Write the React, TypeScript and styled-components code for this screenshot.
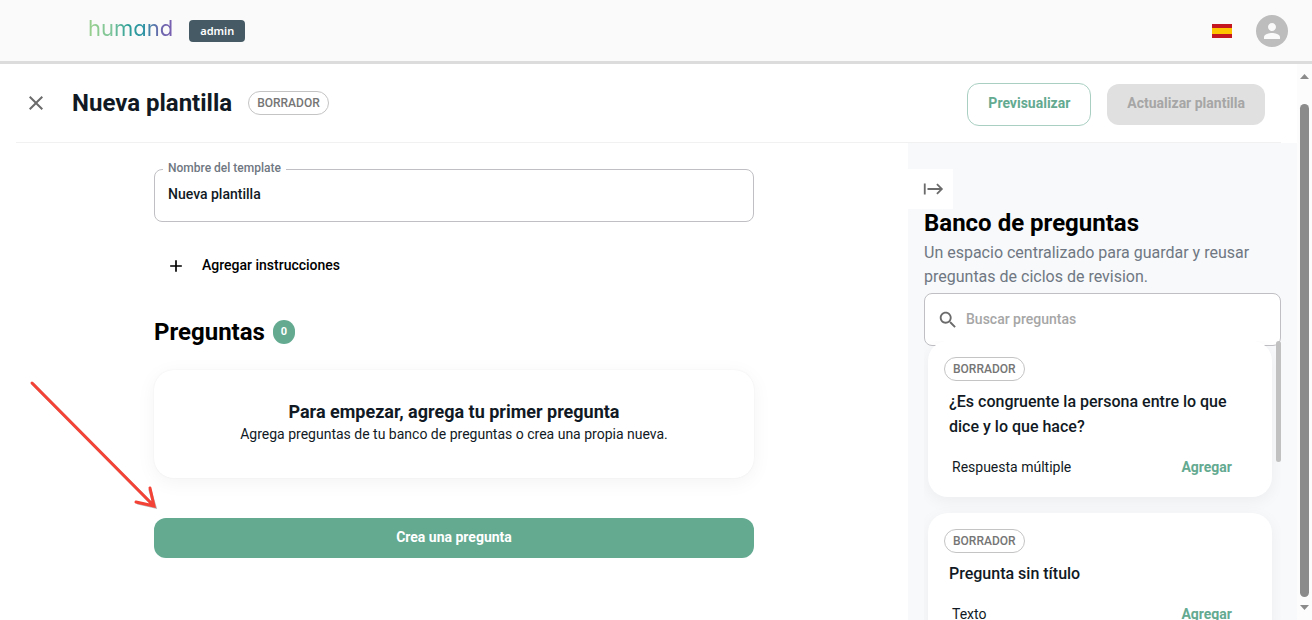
import React from "react";
import styled, { createGlobalStyle } from "styled-components";

const GlobalStyle = createGlobalStyle`
  *, *::before, *::after { box-sizing: border-box; }
  body {
    margin: 0;
    background: #fff;
    color: #111a24;
    font-family: Roboto, "Liberation Sans", sans-serif;
    font-size: 14px;
  }
  h1, h2, h3, p, ul { margin: 0; padding: 0; }
  ul { list-style: none; }
  button, input { font-family: inherit; }
  button { cursor: pointer; }
`;

const green = "#63aa91";

const Page = styled.div`
  display: flex;
  flex-direction: column;
  height: 100vh;
  overflow: hidden;
  position: relative;
`;

const TopBar = styled.header`
  display: flex;
  align-items: center;
  flex: none;
  height: 64px;
  padding: 0 24px 0 88px;
  background: #fafafa;
  border-bottom: 3px solid #dcdcdc;
`;

const Logo = styled.a`
  font-family: Inter, sans-serif;
  font-size: 22px;
  font-weight: 400;
  line-height: 24px;
  font-feature-settings: "cv11";
  text-decoration: none;
  padding-bottom: 6px;
  background: linear-gradient(90deg, #9ad08c 0%, #7cc49a 28%, #2a9d98 48%, #2f93a5 66%, #6a68ad 84%, #7a5fb0 100%);
  background-clip: text;
  -webkit-background-clip: text;
  color: transparent;
`;

const RoleBadge = styled.span`
  margin-left: 16px;
  padding: 0 11px;
  border-radius: 4px;
  background: #455a64;
  color: #fff;
  font: 600 11px/22px "Noto Sans", sans-serif;
`;

const TopActions = styled.div`
  display: flex;
  align-items: center;
  gap: 24px;
  margin-left: auto;
`;

const IconButton = styled.button`
  display: flex;
  align-items: center;
  justify-content: center;
  padding: 0;
  border: 0;
  background: none;
  color: #6b6b6b;
`;

const Avatar = styled(IconButton)`
  width: 32px;
  height: 32px;
  border-radius: 50%;
  background: #bdbdbd;
  color: #fafafa;
`;

const Viewport = styled.div`
  display: flex;
  flex: 1;
  min-height: 0;
`;

const Content = styled.div`
  display: flex;
  flex-direction: column;
  flex: 1;
  min-width: 0;
`;

const TitleBar = styled.div`
  display: flex;
  align-items: center;
  flex: none;
  height: 79px;
  margin: 0 16px;
  padding: 0 16px 0 8px;
  border-bottom: 1px solid #f1f1f2;
`;

const PageTitle = styled.h1`
  margin: 0 16px 0 24px;
  font-size: 24px;
  line-height: 32px;
  font-weight: 700;
`;

const Chip = styled.span`
  display: inline-block;
  padding: 0 8px;
  border: 1px solid #c4c4c4;
  border-radius: 12px;
  background: #fff;
  color: #757575;
  font-size: 12px;
  line-height: 22px;
  font-weight: 500;
`;

const Actions = styled.div`
  display: flex;
  align-items: center;
  gap: 16px;
  margin-left: auto;
  padding-top: 2px;
`;

const Button = styled.button<{ $kind: "outline" | "muted" | "primary" }>`
  padding: 0 20px 2px;
  border-radius: 12px;
  font-size: 14px;
  font-weight: 700;
  line-height: ${(p) => (p.$kind === "primary" ? "38px" : "39px")};
  border: ${(p) => (p.$kind === "outline" ? "1px solid #a9cfc2" : "0")};
  background: ${(p) => (p.$kind === "outline" ? "#fff" : p.$kind === "muted" ? "#e0e0e0" : green)};
  color: ${(p) => (p.$kind === "outline" ? green : p.$kind === "muted" ? "#a6a6a6" : "#fff")};
`;

const Columns = styled.div`
  display: flex;
  flex: 1;
  min-height: 0;
`;

const Editor = styled.main`
  flex: 1;
  min-width: 0;
  padding-top: 18px;
`;

const Form = styled.div`
  display: flex;
  flex-direction: column;
  max-width: 600px;
  margin: 0 auto;
`;

const Field = styled.fieldset`
  margin: 0;
  padding: 0 8px;
  height: 61px;
  border: 1px solid #c0c0c4;
  border-radius: 8px;
`;

const FieldLegend = styled.legend`
  padding: 0 5px 2px;
  color: #6f7782;
  font-size: 12px;
  line-height: 14px;
  font-weight: 500;
`;

const FieldInput = styled.input`
  display: block;
  width: 100%;
  height: 34px;
  padding: 0 5px;
  border: 0;
  outline: 0;
  background: none;
  color: #111a24;
  font-size: 14px;
  font-weight: 500;
`;

const AddInstructions = styled.button`
  display: flex;
  align-items: center;
  align-self: flex-start;
  gap: 16px;
  margin-top: 24px;
  padding: 0 12px;
  height: 40px;
  border: 0;
  background: none;
  color: #000;
  font-size: 14px;
  font-weight: 500;
`;

const AddLabel = styled.span`
  padding-bottom: 2px;
`;

const SectionHead = styled.div`
  display: flex;
  align-items: center;
  gap: 8px;
  margin-top: 30px;
`;

const SectionTitle = styled.h2`
  color: #000;
  font-size: 24px;
  line-height: 32px;
  font-weight: 700;
`;

const Count = styled.span`
  width: 22px;
  border-radius: 12px;
  background: ${green};
  color: #fff;
  text-align: center;
  font-size: 11px;
  line-height: 24px;
  font-weight: 700;
`;

const EmptyCard = styled.section`
  margin: 22px 0 40px;
  padding: 30px 16px 34px;
  border-radius: 20px;
  background: #fff;
  box-shadow: 0 0 2px rgba(0, 0, 0, 0.06), 0 4px 20px rgba(0, 0, 0, 0.05);
  text-align: center;
`;

const EmptyTitle = styled.h3`
  font-size: 18px;
  line-height: 24px;
  font-weight: 700;
`;

const EmptyText = styled.p`
  line-height: 20px;
`;

const Bank = styled.aside`
  display: flex;
  flex-direction: column;
  width: 389px;
  flex: none;
  padding: 26px 16px 0;
  background: #f7f9fb;
`;

const CollapseButton = styled(IconButton)`
  align-self: flex-start;
  flex: none;
  width: 45px;
  height: 40px;
  margin-left: -16px;
  padding-left: 4px;
  background: #fff;
`;

const BankTitle = styled(SectionTitle)`
  line-height: 28px;
`;

const BankText = styled.p`
  margin: 4px 0;
  color: #6f7782;
  font-size: 16px;
  line-height: 24px;
`;

const Search = styled.label`
  display: flex;
  align-items: center;
  flex: none;
  gap: 7px;
  height: 53px;
  padding: 0 12px;
  border: 1px solid #c0c0c4;
  border-radius: 8px;
  background: #fff;
  color: #6b6b6b;
`;

const SearchInput = styled.input`
  flex: 1;
  min-width: 0;
  padding: 0 0 2px;
  border: 0;
  outline: 0;
  background: none;
  font-size: 14px;
  font-weight: 500;
  &::placeholder { color: #a6a6a6; opacity: 1; }
`;

const ListFrame = styled.div`
  display: flex;
  flex: 1;
  min-height: 0;
  margin-top: -5px;
  overflow: hidden;
`;

const QuestionList = styled.ul`
  display: flex;
  flex-direction: column;
  gap: 16px;
  flex: 1;
  padding: 0 4px;
`;

const ListThumb = styled.div`
  width: 5px;
  height: 121px;
  border-radius: 3px;
  background: #c1c1c1;
`;

const QuestionCard = styled.li`
  padding: 16px;
  border-radius: 20px;
  background: #fff;
  box-shadow: 0 4px 16px rgba(0, 0, 0, 0.05);
`;

const QuestionTitle = styled.h3`
  margin: 8px 5px 14px;
  font-size: 16px;
  line-height: 25px;
  font-weight: 500;
`;

const QuestionFoot = styled.div`
  display: flex;
  align-items: center;
  justify-content: space-between;
  height: 28px;
  padding: 0 24px 0 8px;
`;

const LinkButton = styled.button`
  padding: 0;
  border: 0;
  background: none;
  color: ${green};
  font-size: 14px;
  font-weight: 700;
`;

const ScrollTrack = styled.div`
  display: flex;
  flex-direction: column;
  align-items: center;
  justify-content: space-between;
  flex: none;
  width: 15px;
  padding: 10px 0;
  background: #fcfcfc;
`;

const ScrollThumb = styled.div`
  flex: 1;
  width: 9px;
  margin: 25px 0 8px;
  border-radius: 5px;
  background: #8b8b8b;
`;

const Pointer = styled.svg`
  position: absolute;
  left: 24px;
  top: 374px;
  pointer-events: none;
`;

const Icon = ({ d, size = 24 }: { d: string; size?: number }) => (
  <svg width={size} height={size} viewBox="0 0 24 24" fill="currentColor" aria-hidden="true">
    <path d={d} />
  </svg>
);

const icons = {
  close: "M19 6.41 17.59 5 12 10.59 6.41 5 5 6.41 10.59 12 5 17.59 6.41 19 12 13.41 17.59 19 19 17.59 13.41 12z",
  person: "M12 12c2.21 0 4-1.79 4-4s-1.79-4-4-4-4 1.79-4 4 1.79 4 4 4m0 2c-2.67 0-8 1.34-8 4v2h16v-2c0-2.66-5.33-4-8-4",
  plus: "M19 13h-6v6h-2v-6H5v-2h6V5h2v6h6z",
  search:
    "M15.5 14h-.79l-.28-.27C15.41 12.59 16 11.11 16 9.5 16 5.91 13.09 3 9.5 3S3 5.91 3 9.5 5.91 16 9.5 16c1.61 0 3.09-.59 4.23-1.57l.27.28v.79l5 4.99L20.49 19zm-6 0C7.01 14 5 11.99 5 9.5S7.01 5 9.5 5 14 7.01 14 9.5 11.99 14 9.5 14",
  collapse: "M15.59 7.41 19.17 11H6v2h13.17l-3.59 3.59L17 18l6-6-6-6zM2 6v12h2V6z",
};

const questions = [
  { title: "¿Es congruente la persona entre lo que dice y lo que hace?", type: "Respuesta múltiple" },
  { title: "Pregunta sin título", type: "Texto" },
];

export default function App() {
  return (
    <Page>
      <GlobalStyle />
      <TopBar>
        <Logo href="#">humand</Logo>
        <RoleBadge>admin</RoleBadge>
        <TopActions>
          <IconButton aria-label="Idioma: español">
            <svg width="20" height="14" viewBox="0 0 20 14">
              <rect width="20" height="14" fill="#c4161f" />
              <rect y="4" width="20" height="6" fill="#ffc400" />
            </svg>
          </IconButton>
          <Avatar aria-label="Cuenta">
            <Icon d={icons.person} />
          </Avatar>
        </TopActions>
      </TopBar>
      <Viewport>
        <Content>
          <TitleBar>
            <IconButton aria-label="Cerrar">
              <Icon d={icons.close} />
            </IconButton>
            <PageTitle>Nueva plantilla</PageTitle>
            <Chip>BORRADOR</Chip>
            <Actions>
              <Button $kind="outline">Previsualizar</Button>
              <Button $kind="muted" disabled>
                Actualizar plantilla
              </Button>
            </Actions>
          </TitleBar>
          <Columns>
            <Editor>
              <Form>
                <Field>
                  <FieldLegend>
                    <label htmlFor="template-name">Nombre del template</label>
                  </FieldLegend>
                  <FieldInput id="template-name" defaultValue="Nueva plantilla" />
                </Field>
                <AddInstructions>
                  <Icon d={icons.plus} size={20} />
                  <AddLabel>Agregar instrucciones</AddLabel>
                </AddInstructions>
                <SectionHead>
                  <SectionTitle>Preguntas</SectionTitle>
                  <Count>0</Count>
                </SectionHead>
                <EmptyCard>
                  <EmptyTitle>Para empezar, agrega tu primer pregunta</EmptyTitle>
                  <EmptyText>Agrega preguntas de tu banco de preguntas o crea una propia nueva.</EmptyText>
                </EmptyCard>
                <Button $kind="primary">Crea una pregunta</Button>
              </Form>
            </Editor>
            <Bank>
              <CollapseButton aria-label="Ocultar banco de preguntas">
                <Icon d={icons.collapse} size={22} />
              </CollapseButton>
              <BankTitle>Banco de preguntas</BankTitle>
              <BankText>Un espacio centralizado para guardar y reusar preguntas de ciclos de revision.</BankText>
              <Search>
                <Icon d={icons.search} size={22} />
                <SearchInput type="text" placeholder="Buscar preguntas" aria-label="Buscar preguntas" />
              </Search>
              <ListFrame>
                <QuestionList>
                  {questions.map((q) => (
                    <QuestionCard key={q.title}>
                      <Chip>BORRADOR</Chip>
                      <QuestionTitle>{q.title}</QuestionTitle>
                      <QuestionFoot>
                        <span>{q.type}</span>
                        <LinkButton>Agregar</LinkButton>
                      </QuestionFoot>
                    </QuestionCard>
                  ))}
                </QuestionList>
                <ListThumb />
              </ListFrame>
            </Bank>
          </Columns>
        </Content>
        <ScrollTrack aria-hidden="true">
          <svg width="9" height="5" viewBox="0 0 9 5" fill="#8b8b8b">
            <path d="M0 5 4.500 0 9 5z" />
          </svg>
          <ScrollThumb />
          <svg width="9" height="5" viewBox="0 0 9 5" fill="#8b8b8b">
            <path d="M0 0h9L4.500 5z" />
          </svg>
        </ScrollTrack>
      </Viewport>
      <Pointer width="140" height="142" viewBox="0 0 140 142" fill="none" strokeLinecap="round" aria-hidden="true">
        <path d="M8 9 129 131M125 115l5 17-17-4" stroke="#7a6a68" strokeOpacity="0.5" strokeWidth="3" transform="translate(1 1)" />
        <path d="M8 9 129 131M126 114l4 18-18-4" stroke="#f44336" strokeWidth="3" />
      </Pointer>
    </Page>
  );
}
